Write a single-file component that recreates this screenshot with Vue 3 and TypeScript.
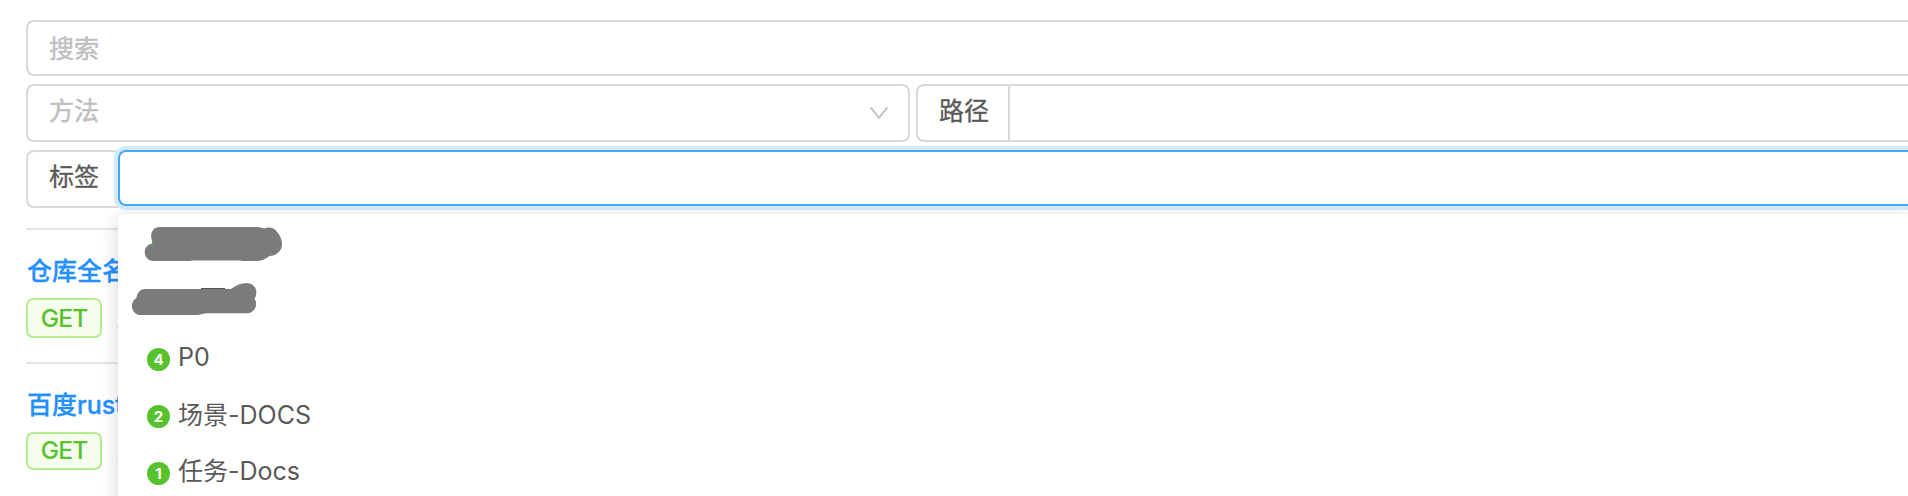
<script setup lang="ts">
interface TagOption {
  count: number
  label: string
}
interface Api {
  title: string
  method: string
  path: string
}

const tags: TagOption[] = [
  { count: 4, label: 'P0' },
  { count: 2, label: '场景-DOCS' },
  { count: 1, label: '任务-Docs' },
]

const apis: Api[] = [
  { title: '仓库全名', method: 'GET', path: '/' },
  { title: '百度rust', method: 'GET', path: '/' },
]
</script>

<template>
  <main class="page">
    <div class="box search"><span class="placeholder">搜索</span></div>

    <div class="row">
      <div class="box select">
        <span class="placeholder">方法</span>
        <svg class="arrow" width="20" height="14" viewBox="0 0 20 14">
          <path d="M1.6 1.4 L10 11.8 L18.4 1.4" fill="none" stroke="#bfbfbf" stroke-width="1.8" />
        </svg>
      </div>
      <div class="box path-group">
        <span class="addon">路径</span>
      </div>
    </div>

    <div class="tag-row">
      <div class="box tag-label">标签</div>
      <div class="tag-field">
        <div class="tag-input"></div>
        <div class="dropdown">
          <svg class="redacted" width="202" height="112" viewBox="118 214 202 112">
            <rect x="152" y="240" width="4" height="4" fill="#52c41a" />
            <path
              fill="#7b7b7b"
              d="M160 227 H257 Q261 227 264 228.600 Q271 226 275.500 230 Q282 237 282 244 Q282 250 277 253.500 Q274 256 269.500 256 Q263 261 257 261 H243 L240 260.500 H193 L189 261 H154 C142 261 141.500 244 153.500 243.500 C149 237 151 227 160 227 Z"
            />
            <rect x="201" y="288" width="24" height="2" fill="#555" />
            <path
              fill="#7b7b7b"
              d="M145 289 H231 Q239 283 246 283 C255 283 259 291 254.500 299 C259 305 254 313 247 313.300 H206 L198 315 H141 C131 315 129 302 136.500 298 C137 293 140 289 145 289 Z"
            />
          </svg>
          <div v-for="tag in tags" :key="tag.label" class="option">
            <span class="badge">{{ tag.count }}</span>
            <span class="option-label">{{ tag.label }}</span>
          </div>
        </div>
      </div>
    </div>

    <article v-for="api in apis" :key="api.title" class="api">
      <div class="title">{{ api.title }}</div>
      <div class="meta">
        <span class="method">{{ api.method }}</span>
        <span class="url">{{ api.path }}</span>
      </div>
    </article>
  </main>
</template>

<style>
body {
  background: #fff;
  overflow: hidden;
}
</style>

<style scoped>
.page {
  width: 1908px;
  height: 496px;
  overflow: hidden;
  box-sizing: border-box;
  padding: 20px 0 0 26px;
  font-family: Inter, 'Noto Sans CJK SC', sans-serif;
  font-size: 25px;
  color: #595959;
}
.page * {
  box-sizing: border-box;
}
.box {
  display: flex;
  border: 2px solid #d9d9d9;
  border-radius: 8px;
  line-height: 50px;
  white-space: nowrap;
  -webkit-text-stroke: 0.3px currentColor;
}
.search,
.path-group {
  border-right: 0;
  border-radius: 8px 0 0 8px;
}
.search {
  height: 56px;
  padding-left: 21px;
  line-height: 54px;
}
.placeholder {
  color: #bfbfbf;
  -webkit-text-stroke: 0.5px currentColor;
}
.row {
  display: flex;
  gap: 6px;
  margin-top: 8px;
}
.select {
  width: 884px;
  height: 58px;
  padding: 0 19px 0 21px;
  justify-content: space-between;
}
.arrow {
  margin-top: 20px;
}
.path-group {
  flex: 1;
  height: 58px;
}
.addon {
  width: 92px;
  padding-left: 21px;
  border-right: 2px solid #d9d9d9;
}
.tag-row {
  display: flex;
  height: 58px;
  margin-top: 8px;
}
.tag-label {
  width: 92px;
  border-right: 0;
  border-radius: 8px 0 0 8px;
  padding-left: 21px;
}
.tag-field {
  position: relative;
  flex: 1;
}
.tag-input {
  height: 56px;
  border: 2px solid #48a9fb;
  border-right: 0;
  border-radius: 8px 0 0 8px;
  background: #fff;
  box-shadow: 0 0 0 4px #d3eaff;
}
.dropdown {
  position: absolute;
  top: 64px;
  left: 0;
  right: 0;
  height: 360px;
  border-radius: 6px 0 0 6px;
  background: #fff;
  box-shadow: 0 4px 18px rgba(0, 0, 0, 0.17);
}
.redacted {
  display: block;
  margin-bottom: 2px;
}
.option {
  display: flex;
  height: 57px;
  padding-left: 29px;
  gap: 8px;
  line-height: 59px;
}
.option:nth-of-type(2) .option-label {
  line-height: 61px;
}
.badge {
  width: 23px;
  height: 23px;
  margin-top: 20px;
  border-radius: 50%;
  background: #57c22d;
  color: #fff;
  font-size: 15px;
  font-weight: 700;
  line-height: 23px;
  text-align: center;
}
.api {
  height: 134px;
  border-top: 2px solid #e4e4e4;
}
.api:first-of-type {
  margin-top: 20px;
}
.title {
  height: 68px;
  padding: 21px 0 0 1px;
  line-height: 40px;
  color: #2390ff;
  font-weight: 500;
  -webkit-text-stroke: 0.3px currentColor;
}
.meta {
  display: flex;
  gap: 15px;
  line-height: 36px;
}
.method {
  width: 76px;
  height: 40px;
  border: 2px solid #b7eb8f;
  border-radius: 7px;
  background: #f6ffed;
  color: #57c22d;
  font-size: 24.500px;
  font-weight: 500;
  letter-spacing: -0.8px;
  text-align: center;
}
.api:last-of-type .method {
  height: 38px;
  line-height: 32px;
}
.url {
  color: #a08060;
}
</style>
